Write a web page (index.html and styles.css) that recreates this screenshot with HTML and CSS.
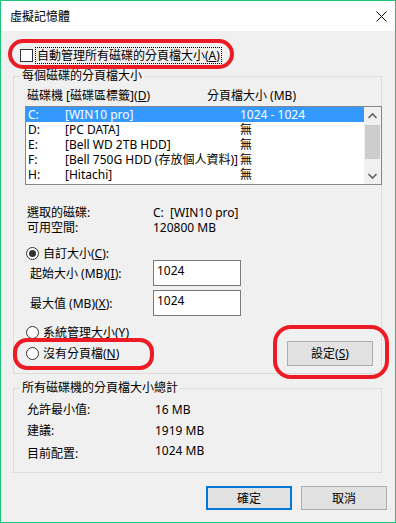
FILE: index.html
```html
<!DOCTYPE html>
<html lang="zh-Hant">
<head>
<meta charset="utf-8">
<title>虛擬記憶體</title>
<link rel="stylesheet" href="styles.css">
</head>
<body>
<div class="window">
  <div class="titlebar">
    <span class="title">虛擬記憶體</span>
    <svg class="close" width="11" height="11" viewBox="0 0 11 11"><path d="M0.5 0.5 L10.5 10.5 M10.5 0.5 L0.5 10.5" stroke="#000" stroke-width="1" fill="none"/></svg>
  </div>
  <div class="client">
    <div class="auto-row">
      <span class="checkbox"></span>
      <span class="focus">自動管理所有磁碟的分頁檔大小(<u>A</u>)</span>
    </div>

    <fieldset class="group group-drives">
      <legend>每個磁碟的分頁檔大小</legend>
      <div class="list-head">
        <span class="col-drive">磁碟機 [磁碟區標籤](<u>D</u>)</span>
        <span class="col-size">分頁檔大小 (MB)</span>
      </div>
      <div class="listbox">
        <div class="rows">
          <div class="row selected"><span class="c1">C:</span><span class="c2">[WIN10 pro]</span><span class="c3">1024 - 1024</span></div>
          <div class="row"><span class="c1">D:</span><span class="c2">[PC DATA]</span><span class="c3">無</span></div>
          <div class="row"><span class="c1">E:</span><span class="c2">[Bell WD 2TB HDD]</span><span class="c3">無</span></div>
          <div class="row"><span class="c1">F:</span><span class="c2">[Bell 750G HDD (存放個人資料)]</span><span class="c3">無</span></div>
          <div class="row"><span class="c1">H:</span><span class="c2">[Hitachi]</span><span class="c3">無</span></div>
        </div>
        <div class="scrollbar">
          <svg class="sb-btn" width="17" height="17" viewBox="0 0 17 17"><polyline points="4.5,11 8.5,7 12.5,11" fill="none" stroke="#606060" stroke-width="1.6"/></svg>
          <div class="track"><div class="thumb"></div></div>
          <svg class="sb-btn" width="17" height="17" viewBox="0 0 17 17"><polyline points="4.5,7 8.5,11 12.5,7" fill="none" stroke="#606060" stroke-width="1.6"/></svg>
        </div>
      </div>

      <div class="info">
        <span class="info-label">選取的磁碟:</span><span>C:&nbsp; [WIN10 pro]</span>
        <span class="info-label">可用空間:</span><span>120800 MB</span>
      </div>

      <div class="radio-row custom">
        <span class="radio checked"></span><span>自訂大小(<u>C</u>):</span>
      </div>
      <div class="field-row">
        <span class="field-label">起始大小 (MB)(<u>I</u>):</span>
        <span class="textbox">1024</span>
      </div>
      <div class="field-row second">
        <span class="field-label">最大值 (MB)(<u>X</u>):</span>
        <span class="textbox">1024</span>
      </div>

      <div class="bottom-area">
        <div class="radios">
          <div class="radio-row"><span class="radio"></span><span>系統管理大小(<u>Y</u>)</span></div>
          <div class="radio-row none"><span class="radio"></span><span>沒有分頁檔(<u>N</u>)</span></div>
        </div>
        <button class="btn set-btn">設定(<u>S</u>)</button>
      </div>
    </fieldset>

    <fieldset class="group group-total">
      <legend>所有磁碟機的分頁檔大小總計</legend>
      <div class="total-row first"><span class="total-label">允許最小值:</span><span>16 MB</span></div>
      <div class="total-row"><span class="total-label">建議:</span><span>1919 MB</span></div>
      <div class="total-row last"><span class="total-label shifted">目前配置:</span><span>1024 MB</span></div>
    </fieldset>

    <div class="buttons">
      <button class="btn default-btn">確定</button>
      <button class="btn">取消</button>
    </div>
  </div>

  <div class="mark mark-auto"></div>
  <div class="mark mark-none"></div>
  <div class="mark mark-set"></div>
</div>
</body>
</html>
```

FILE: styles.css
```css
* { box-sizing: border-box; }

html, body {
  margin: 0;
  padding: 0;
  background: #f0f0f0;
}

body {
  font-family: "Noto Sans", "Noto Sans CJK TC", sans-serif;
  font-size: 12px;
  line-height: 15px;
  color: #000;
}

u { text-decoration: underline; text-underline-offset: 1px; }

.window {
  position: relative;
  width: 396px;
  height: 523px;
  border: 1px solid #1ec47c;
  background: #f0f0f0;
  overflow: hidden;
}

.titlebar {
  height: 30px;
  background: #fff;
  display: flex;
  align-items: center;
  justify-content: space-between;
  padding: 0 8px 0 9px;
}

.close { display: block; margin-top: 1px; }

.client {
  padding: 0 12px;
}

/* auto checkbox */
.auto-row {
  margin-top: 16px;
  display: flex;
  align-items: center;
  height: 17px;
  padding-left: 7px;
}

.checkbox {
  width: 13px;
  height: 13px;
  border: 1px solid #333;
  background: #fff;
  flex: none;
}

.focus {
  margin-left: 2px;
  border: 1px dotted #000;
  padding: 0 1px;
  line-height: 15px;
  white-space: nowrap;
}

/* group boxes */
.group {
  margin: 5px 0 0 0;
  width: 369px;
  border: 1px solid #dcdcdc;
  padding: 0 0 7px 0;
  min-width: 0;
}

.group legend {
  margin-left: 6px;
  padding: 0 2px;
  line-height: 14px;
}

.list-head {
  margin-top: 5px;
  padding-left: 13px;
  display: flex;
  white-space: nowrap;
}

.col-drive { width: 180px; }

.listbox {
  margin: 3px 0 0 11px;
  width: 357px;
  height: 79px;
  border: 1px solid #828790;
  background: #fff;
  display: flex;
}

.rows {
  flex: 1;
  overflow: hidden;
}

.row {
  height: 15px;
  line-height: 15px;
  padding-left: 2px;
  display: flex;
  white-space: nowrap;
}

.row.selected {
  background: #3399ff;
  color: #fff;
}

.c1 { width: 37px; flex: none; }
.c2 { width: 175px; flex: none; }
.c3 { flex: none; }

.scrollbar {
  width: 17px;
  flex: none;
  background: #f0f0f0;
  display: flex;
  flex-direction: column;
}

.sb-btn { display: block; flex: none; }

.track {
  flex: 1;
  padding: 1px 1px 0;
}

.thumb {
  height: 34px;
  background: #cdcdcd;
}

/* selected drive info */
.info {
  margin-top: 20px;
  padding-left: 13px;
  display: grid;
  grid-template-columns: 126px auto;
  line-height: 15px;
  white-space: nowrap;
}

/* radios */
.radio-row {
  display: flex;
  align-items: center;
  height: 13px;
  line-height: 13px;
  padding-left: 12px;
  white-space: nowrap;
}

.radio-row.custom { margin-top: 12px; }

.radio {
  width: 13px;
  height: 13px;
  border: 1px solid #333;
  border-radius: 50%;
  background: #fff;
  margin-right: 4px;
  flex: none;
  display: flex;
  align-items: center;
  justify-content: center;
}

.radio.checked::after {
  content: "";
  width: 7px;
  height: 7px;
  border-radius: 50%;
  background: #333;
}

.field-row {
  display: flex;
  align-items: center;
  height: 26px;
  padding-left: 16px;
  white-space: nowrap;
}

.field-row.second { margin-top: 4px; }

.field-label { width: 123px; flex: none; }

.textbox {
  width: 88px;
  height: 26px;
  border: 1px solid #7a7a7a;
  background: #fff;
  padding: 2px 3px 0;
  line-height: 15px;
  align-self: flex-start;
}

.bottom-area {
  display: flex;
  align-items: flex-start;
}

.radios { margin-top: 10px; }

.radio-row.none { margin-top: 8px; }

.btn {
  font: inherit;
  line-height: 15px;
  color: #000;
  width: 86px;
  height: 24px;
  background: #e1e1e1;
  border: 1px solid #adadad;
  padding: 0;
  border-radius: 0;
  display: flex;
  align-items: center;
  justify-content: center;
}

.set-btn {
  margin: 25px 8px 0 auto;
  height: 25px;
}

/* totals */
.group-total { margin-top: 7px; padding-bottom: 11px; }

.total-row {
  display: flex;
  align-items: flex-start;
  padding-left: 13px;
  line-height: 15px;
  white-space: nowrap;
}

.total-row.first { margin-top: 7px; }
.total-row + .total-row { margin-top: 6px; }
.total-row.last { margin-top: 5px; }

.total-label { width: 128px; flex: none; }
.total-label.shifted { padding-top: 3px; }

/* dialog buttons */
.buttons {
  margin-top: 13px;
  display: flex;
  justify-content: flex-end;
  gap: 9px;
  padding-right: 8px;
  margin-right: -12px;
}

.default-btn {
  border: 2px solid #0078d7;
}

/* red annotation marks drawn over the dialog */
.mark {
  position: absolute;
  border: 4px solid #ed1c24;
  pointer-events: none;
}

.mark-auto {
  left: 7px;
  top: 38px;
  width: 226px;
  height: 30px;
  border-radius: 15px;
}

.mark-none {
  left: 12px;
  top: 337px;
  width: 141px;
  height: 32px;
  border-radius: 14px;
}

.mark-set {
  left: 272px;
  top: 324px;
  width: 116px;
  height: 54px;
  border-radius: 18px;
}
```
